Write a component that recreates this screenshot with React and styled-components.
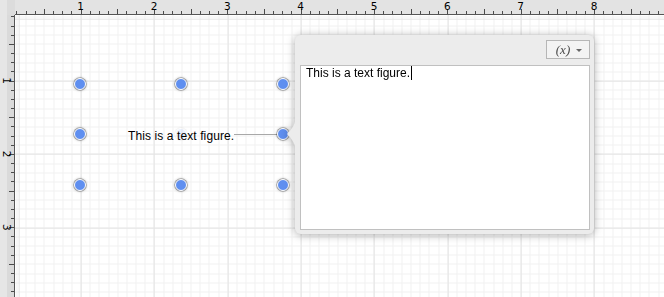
import React from 'react';
import styled, { createGlobalStyle } from 'styled-components';

const INCH = 73.333;
const ORIGIN = 7.33;
const RULER = 15;
const W = 664;
const H = 297;

const Global = createGlobalStyle`
  html, body { margin: 0; padding: 0; background: #fff; }
  body { font-family: "Liberation Sans", Arial, sans-serif; overflow: hidden; }
`;

const Window = styled.div`
  width: ${W}px;
  height: ${H}px;
  display: grid;
  grid-template-columns: ${RULER}px 1fr;
  grid-template-rows: ${RULER}px 1fr;
  background: #e2e2e2;
  overflow: hidden;
`;

const Corner = styled.div`
  background: linear-gradient(to right, #e6e6e6 0 7px, #dcdcdc 7px);
`;

const TopRuler = styled.div`
  background: #e3e3e3;
  overflow: hidden;
`;

const LeftRuler = styled.div`
  background: linear-gradient(to right, #e6e6e6 0 7px, #dadada 7px);
  overflow: hidden;
`;

const Canvas = styled.div`
  position: relative;
  overflow: hidden;
  background-color: #fff;
  background-image:
    repeating-linear-gradient(to right, #e4e4e4 0 1px, transparent 1px ${INCH}px),
    repeating-linear-gradient(to bottom, #e4e4e4 0 1px, transparent 1px ${INCH}px),
    repeating-linear-gradient(to right, #f1f1f1 0 1px, transparent 1px ${INCH / 8}px),
    repeating-linear-gradient(to bottom, #f1f1f1 0 1px, transparent 1px ${INCH / 8}px);
  background-position:
    ${(ORIGIN - RULER + INCH) % INCH}px 0,
    0 ${(ORIGIN - RULER + INCH) % INCH}px,
    ${(ORIGIN - RULER + INCH) % (INCH / 8)}px 0,
    0 ${(ORIGIN - RULER + INCH) % (INCH / 8)}px;
`;

const Dot = styled.div`
  position: absolute;
  left: ${(p) => p.$x - RULER - 6.5}px;
  top: ${(p) => p.$y - RULER - 6.5}px;
  width: 10px;
  height: 10px;
  border-radius: 50%;
  background: #5f8ff0;
  border: 1.5px solid #fff;
  box-shadow: 0 0 0 0.8px rgba(0, 0, 0, 0.28), 0 0 3px rgba(0, 0, 0, 0.4);
  opacity: ${(p) => (p.$hidden ? 0.12 : 1)};
`;

const TextFigure = styled.div`
  position: absolute;
  left: ${128 - RULER}px;
  top: ${129 - RULER}px;
  font-size: 12px;
  letter-spacing: 0.1px;
  line-height: 14px;
  color: #000;
  white-space: nowrap;
`;

const Connector = styled.div`
  position: absolute;
  left: ${234 - RULER}px;
  top: ${134 - RULER}px;
  width: 48px;
  height: 1px;
  background: #a8a8a8;
`;

const Popover = styled.div`
  position: absolute;
  left: ${295 - RULER}px;
  top: ${35 - RULER}px;
  width: 299px;
  height: 199px;
  box-sizing: border-box;
  display: flex;
  flex-direction: column;
  padding: 5px 4px 4px 5px;
  background: #ececec;
  border-radius: 6px;
  filter: drop-shadow(0 1px 4px rgba(0, 0, 0, 0.33));
`;

const Arrow = styled.svg`
  position: absolute;
  left: -8px;
  top: ${134 - 35 - 20}px;
  width: 9px;
  height: 40px;
  overflow: visible;
`;

const Header = styled.div`
  height: 25px;
  display: flex;
  justify-content: flex-end;
  align-items: flex-start;
`;

const VarButton = styled.div`
  box-sizing: border-box;
  width: 44px;
  height: 19px;
  display: flex;
  align-items: center;
  justify-content: center;
  gap: 6px;
  padding-left: 2px;
  background: #f3f3f3;
  border: 1px solid #b6b6b6;
  font-family: "Liberation Serif", "Times New Roman", serif;
  font-style: italic;
  font-size: 13px;
  color: #4a4a4a;
`;

const Caret = styled.span`
  width: 0;
  height: 0;
  border-left: 3px solid transparent;
  border-right: 3px solid transparent;
  border-top: 3px solid #666;
  margin-top: 1px;
`;

const TextBox = styled.div`
  flex: 1;
  background: #fff;
  border: 1px solid #c0c0c0;
  padding: 0 5px;
  font-size: 12px;
  line-height: 14px;
  color: #000;
`;

const Cursor = styled.span`
  display: inline-block;
  width: 1px;
  height: 14px;
  background: #000;
  vertical-align: -3px;
  margin-left: 1px;
`;

function TopRulerDrawing() {
  const ticks = [];
  const labels = [];
  for (let k = 1; k < 80; k++) {
    const px = ORIGIN + (k * INCH) / 8 - RULER;
    if (px > W) break;
    const x = Math.round(px) + 0.5;
    const y1 = k % 4 === 0 ? 9 : 11;
    ticks.push(<line key={k} x1={x} x2={x} y1={y1} y2={14} stroke="#4a4a4a" strokeWidth="1" />);
    if (k % 8 === 0) {
      labels.push(
        <text key={'t' + k} x={px} y={9.5} textAnchor="middle" fontSize="10.5" fill="#000"
          fontFamily='"DejaVu Sans", sans-serif'>{k / 8}</text>
      );
    }
  }
  return (
    <svg width={W} height={RULER}>
      {ticks}
      {labels}
      <line x1="0" x2={W} y1="14.5" y2="14.5" stroke="#555" strokeWidth="1" />
    </svg>
  );
}

function LeftRulerDrawing() {
  const ticks = [];
  const labels = [];
  for (let k = 1; k < 40; k++) {
    const py = ORIGIN + (k * INCH) / 8 - RULER;
    if (py > H) break;
    const y = Math.round(py) + 0.5;
    const x1 = k % 4 === 0 ? 9 : 11;
    ticks.push(<line key={k} y1={y} y2={y} x1={x1} x2={14} stroke="#4a4a4a" strokeWidth="1" />);
    if (k % 8 === 0 && py < H - RULER - 8) {
      labels.push(
        <text key={'t' + k} transform={`translate(2.5 ${py}) rotate(90)`} textAnchor="middle"
          fontSize="10.5" fill="#000" fontFamily='"DejaVu Sans", sans-serif'>{k / 8}</text>
      );
    }
  }
  return (
    <svg width={RULER} height={H}>
      {ticks}
      {labels}
      <line y1="0" y2={H} x1="14.5" x2="14.5" stroke="#555" strokeWidth="1" />
    </svg>
  );
}

const dots = [
  [80, 84], [181, 84], [283, 84],
  [80, 134], [181, 134, true], [283, 134],
  [80, 185], [181, 185], [283, 185],
];

export default function App() {
  return (
    <>
      <Global />
      <Window>
        <Corner />
        <TopRuler><TopRulerDrawing /></TopRuler>
        <LeftRuler><LeftRulerDrawing /></LeftRuler>
        <Canvas>
          <Connector />
          {dots.map(([x, y, h], i) => (
            <Dot key={i} $x={x} $y={y} $hidden={h} />
          ))}
          <TextFigure>This is a text figure.</TextFigure>
          <Popover>
            <Arrow viewBox="0 0 9 40">
              <path d="M9 0 C9 10 5 15 0 20 C5 25 9 30 9 40 Z" fill="#ececec" />
            </Arrow>
            <Header>
              <VarButton>
                <span>(x)</span>
                <Caret />
              </VarButton>
            </Header>
            <TextBox>
              This is a text figure.<Cursor />
            </TextBox>
          </Popover>
        </Canvas>
      </Window>
    </>
  );
}
